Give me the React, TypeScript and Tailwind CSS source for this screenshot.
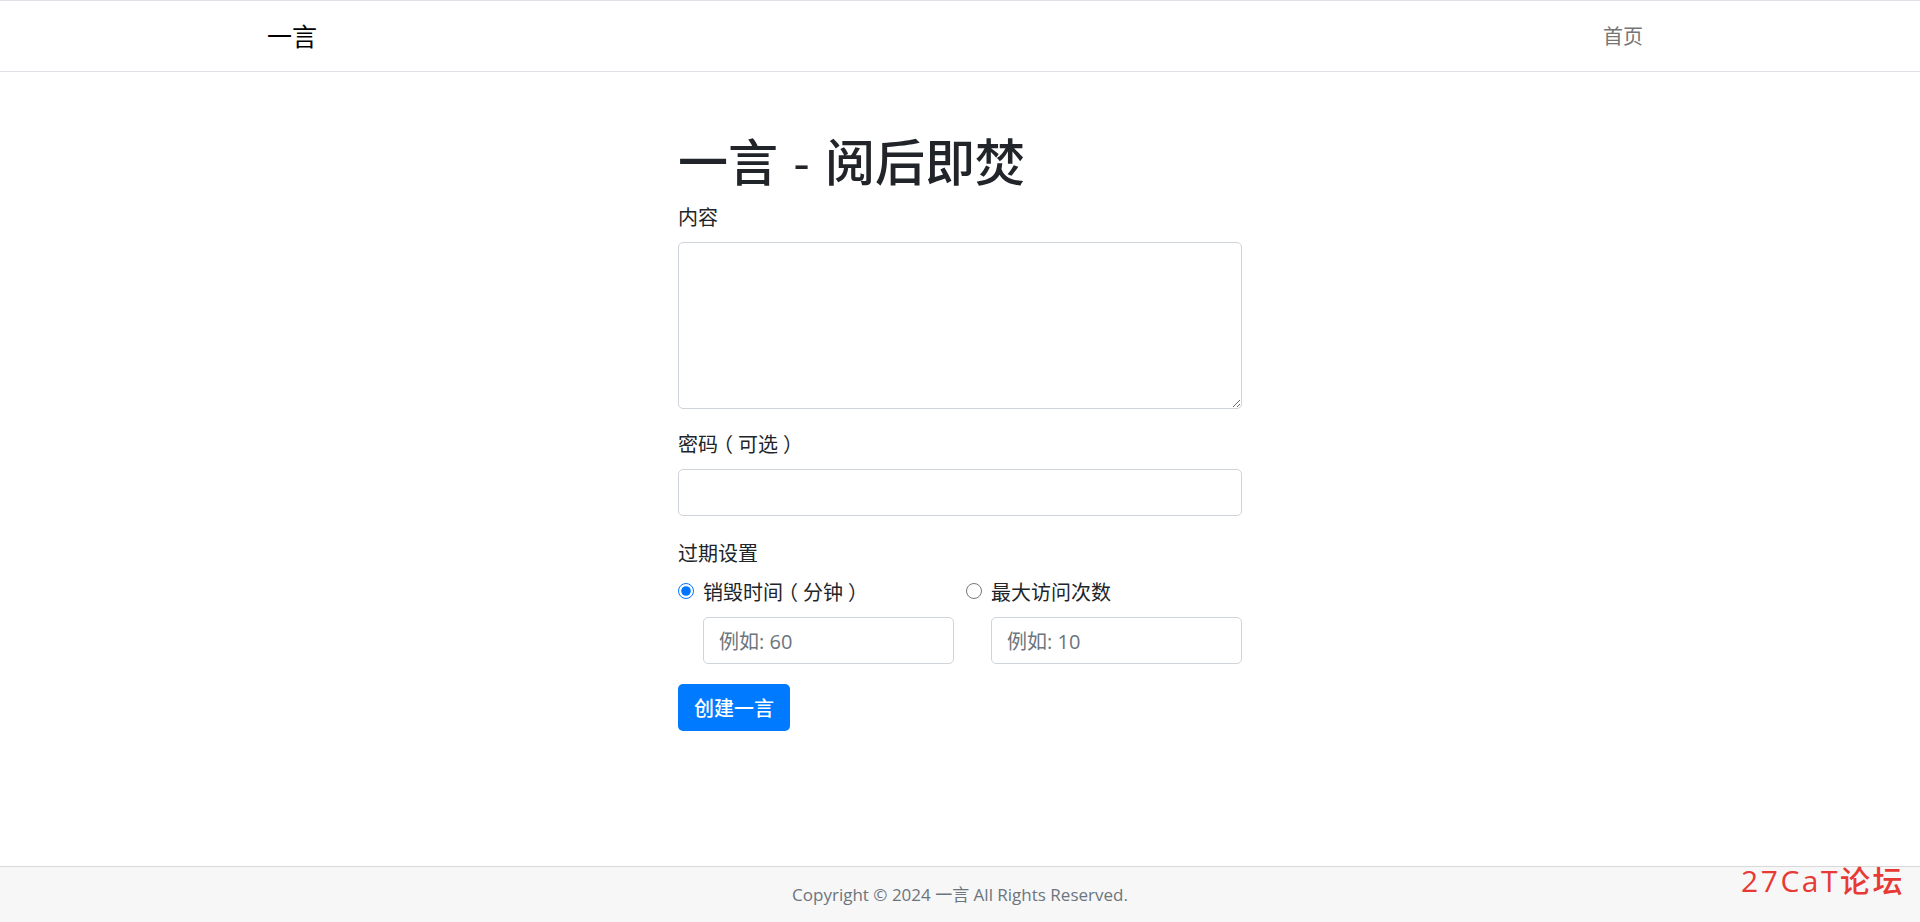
const fontStack = "font-['Open_Sans','Noto_Sans_CJK_SC',sans-serif]";

const fieldClass =
  "block w-full h-[47px] rounded-[5px] border border-[#ced4da] bg-white px-[15px] pt-[2px] text-[20px] text-[#495057] placeholder:text-[#6c757d] outline-none";

const labelClass = "mb-[8px] block text-[20px] leading-[32px]";

// the full-width brackets sit in the middle of their cell in the reference
function Bracket({ char }: { char: string }) {
  return <span className="inline-block w-[20px] text-center [font-feature-settings:'halt']">{char}</span>;
}

export default function App() {
  return (
    <div className={`${fontStack} relative flex min-h-screen flex-col bg-white text-[#212529]`}>
      {/* Top navigation */}
      <nav className="h-[72px] border-y border-[#dee2e6]">
        <div className="mx-auto flex h-full w-[1410px] items-center justify-between px-[12px] pt-[1px]">
          <a className="pb-[2px] text-[25px] leading-[36px] text-black">一言</a>
          <a className="px-[10px] text-[20px] text-[#757575]">首页</a>
        </div>
      </nav>

      {/* Create form */}
      <main className="flex-1">
        <div className="mx-auto w-[564px] pt-[60px]">
          <h1 className="mb-[10px] text-[50px] leading-[60px] font-medium [word-spacing:2.5px]">一言 - 阅后即焚</h1>
          <form>
            <div className="mb-[20px]">
              <label className={labelClass}>内容</label>
              <textarea className="block h-[167px] w-full rounded-[5px] border border-[#ced4da] bg-white px-[16px] py-[8px] outline-none" />
            </div>
            <div className="mb-[21px]">
              <label className={labelClass}>
                密码
                <Bracket char="（" />
                可选
                <Bracket char="）" />
              </label>
              <input type="password" className={fieldClass} />
            </div>
            <div className="mb-[20px]">
              <label className="mb-[7px] block pt-[1px] text-[20px] leading-[32px]">过期设置</label>
              <div className="grid grid-cols-2 gap-x-[12px]">
                <div>
                  <div className="flex h-[30px] items-center gap-[9px]">
                    <input type="radio" name="expire" defaultChecked className="m-0 mb-[2px] h-[16px] w-[16px] accent-[#0075ff]" />
                    <span className="pt-[2px] text-[20px] leading-[30px]">
                      销毁时间
                      <Bracket char="（" />
                      分钟
                      <Bracket char="）" />
                    </span>
                  </div>
                  <div className="mt-[10px] pl-[25px]">
                    <input className={fieldClass} placeholder="例如: 60" />
                  </div>
                </div>
                <div>
                  <div className="flex h-[30px] items-center gap-[9px]">
                    <input type="radio" name="expire" className="m-0 mb-[2px] h-[16px] w-[16px]" />
                    <span className="pt-[2px] text-[20px] leading-[30px]">最大访问次数</span>
                  </div>
                  <div className="mt-[10px] pl-[25px]">
                    <input className={fieldClass} placeholder="例如: 10" />
                  </div>
                </div>
              </div>
            </div>
            <button type="button" className="h-[47px] rounded-[5px] bg-[#007bff] px-[16px] pt-[2px] text-[20px] font-medium text-white">
              创建一言
            </button>
          </form>
        </div>
      </main>

      <footer className="flex h-[56px] items-center justify-center border-t border-[#d9d9d9] bg-[#f7f7f7] pt-[1px] text-[17px] text-[#6c757d]">
        Copyright © 2024 一言 All Rights Reserved.
      </footer>

      {/* Forum watermark */}
      <span className="absolute right-[15px] bottom-[23px] text-[30px] leading-[36px] font-medium tracking-[2.5px] text-[#e83a35]">27CaT论坛</span>
    </div>
  );
}
